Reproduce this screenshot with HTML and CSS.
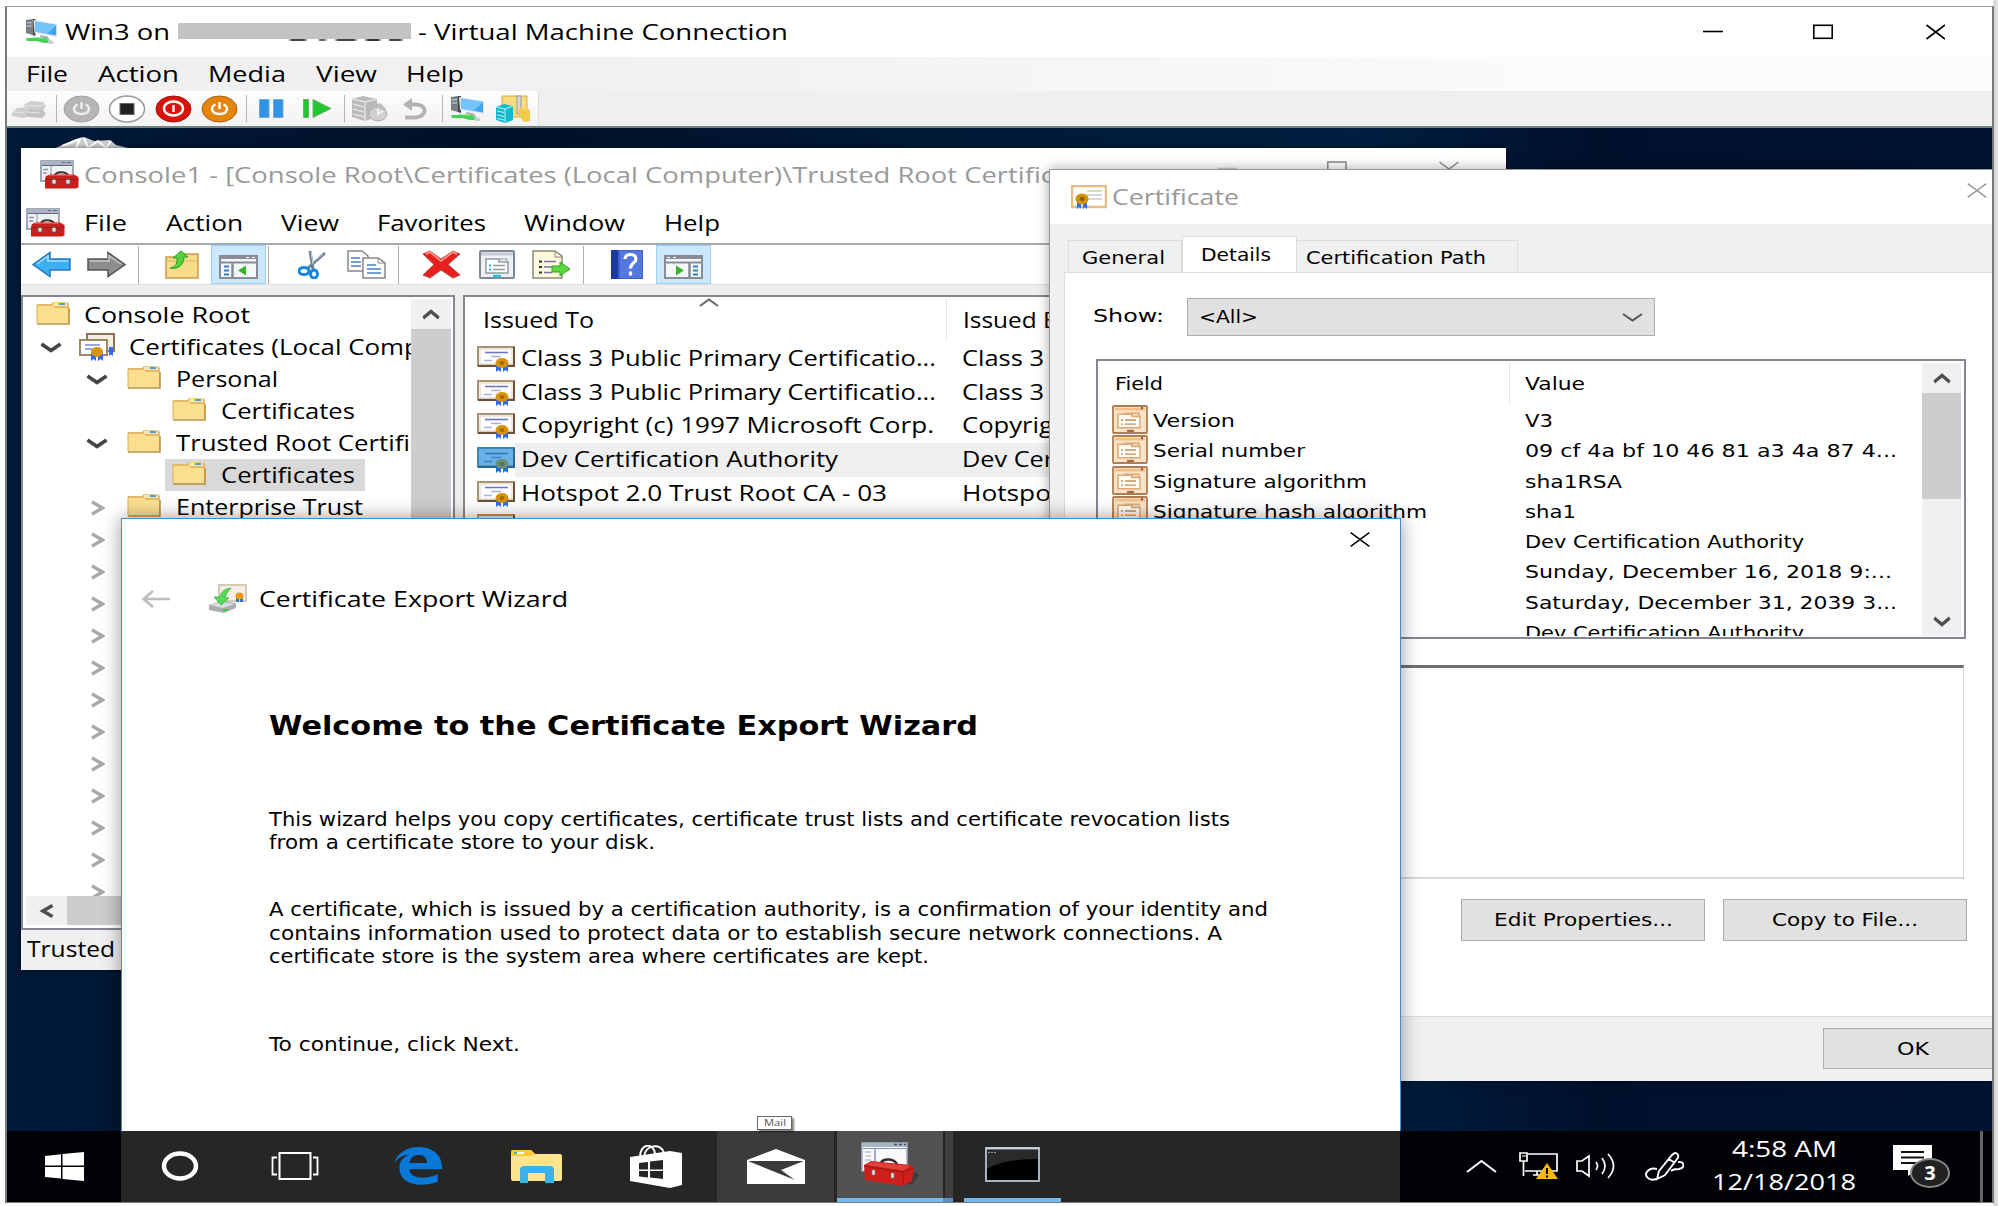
FILE: index.html
```html
<!DOCTYPE html>
<html lang="en">
<head>
<meta charset="utf-8">
<title>Virtual Machine Connection</title>
<link rel="stylesheet" href="styles.css">
</head>
<body>
<svg class="defs" width="0" height="0">
  <symbol id="folder" viewBox="0 0 34 24" preserveAspectRatio="none">
    <path d="M1 3H15L17 1H31L33 3V22H1Z" fill="#e3b96a"/>
    <path d="M17 1.5H31V5H17Z" fill="#f7e3a5"/><path d="M23 2h6v2h-6z" fill="#4a9fe0"/>
    <path d="M1 5H17L19 7H32V22H1Z" fill="#fbdf8e"/><path d="M1 23H33V7" fill="none" stroke="#b98e3e" stroke-width="1.5"/>
    <path d="M1 4V22" stroke="#d9ae58"/>
  </symbol>
  <symbol id="mmc" viewBox="0 0 39 29" preserveAspectRatio="none">
    <rect x="1" y="1" width="32" height="20" fill="#eef1f4" stroke="#8a96a6" stroke-width="1.600"/>
    <rect x="1" y="1" width="32" height="4" fill="#a9b4c4"/><path d="M22 2.500h3M27 2.500h4M2 5.500h30" stroke="#5b6a80" stroke-width="1.200"/>
    <path d="M3 9.500h5M3 13h4" stroke="#8a96a6" stroke-width="1.500"/><path d="M11 6v10" stroke="#8a96a6"/>
    <path d="M15 16C15 11 27 11 28 16" fill="none" stroke="#3a3030" stroke-width="2"/>
    <path d="M6 16L10 14.500H34L38.500 17V27.500L36 28.500H5V19Z" fill="#c9201e"/><path d="M5 19.500H38.500" stroke="#94191a" stroke-width=".8"/>
    <path d="M9 15.300H33" stroke="#ec5e58"/><rect x="12" y="19.500" width="4" height="4.500" fill="#ddd" stroke="#555" stroke-width=".7"/><rect x="26" y="19.500" width="4" height="4.500" fill="#ddd" stroke="#555" stroke-width=".7"/>
  </symbol>
  <symbol id="mmcbig" viewBox="0 0 58 44" preserveAspectRatio="none">
    <rect x="1" y="1" width="45" height="28" fill="#f6f8fa" stroke="#a9b0ba" stroke-width="1.500"/>
    <rect x="1" y="1" width="45" height="4" fill="#a9b4c4"/><path d="M33 2.500h3M38 2.500h3M43 2.500h2" stroke="#3e4c66" stroke-width="1.500"/><path d="M2 6.500H45" stroke="#8794a8"/>
    <path d="M4 10h6M5 14h5M4 18h6" stroke="#9aa" stroke-width="1.200"/><path d="M14 7v14" stroke="#9fb0c6" stroke-width="2"/>
    <path d="M50 28L58 33L52 42L38 43Z" fill="#3d3d3d"/>
    <path d="M20 22C20 15 37 16 36 25" fill="none" stroke="#2b2b2b" stroke-width="2.500"/>
    <path d="M3 23L10 19L50 23L53 27L51 39L42 44L4 38Z" fill="#cf1f1d"/><path d="M3 24L42 30L53 26M42 30V43" fill="none" stroke="#9c1414"/><path d="M10 20L50 24L42 28.500L5 23Z" fill="#e2413b"/>
    <path d="M11 28h3v5h-3zM30 31h3v5h-3z" fill="#e8e8e8" stroke="#777" stroke-width=".7"/>
  </symbol>
  <symbol id="cert" viewBox="0 0 38 26" preserveAspectRatio="none">
    <rect x="1" y="1" width="36" height="18.500" fill="#fff" stroke="#a89274" stroke-width="2"/>
    <path d="M37 1V20H1" fill="none" stroke="#6b5236" stroke-width="2"/><rect x="3" y="3" width="32" height="15" fill="none" stroke="#ddd2c0"/>
    <path d="M8 6.500H31" stroke="#6a78c8" stroke-width="1.600"/><path d="M14 10.500h10M7 14.500h8" stroke="#aab0dc" stroke-width="1.400"/>
    <path d="M19 19h5v7l-2.500-2L19 26zM26 19h5v7l-2.500-2L26 26z" fill="#2d6cf0"/>
    <ellipse cx="25" cy="17" rx="6.500" ry="5" fill="#d8930b"/><ellipse cx="25" cy="17" rx="2.500" ry="2" fill="#a86a00"/>
  </symbol>
  <symbol id="certsel" viewBox="0 0 38 26" preserveAspectRatio="none">
    <rect x="1" y="1" width="36" height="18.500" fill="#68b2e6" stroke="#3f84b4" stroke-width="2"/>
    <path d="M37 1V20H1" fill="none" stroke="#2b6690" stroke-width="2"/>
    <path d="M8 6.500H31" stroke="#3272c2" stroke-width="1.600"/><path d="M14 10.500h10M7 14.500h8" stroke="#3d80c8" stroke-width="1.400"/>
    <path d="M19 19h5v7l-2.500-2L19 26zM26 19h5v7l-2.500-2L26 26z" fill="#1a72d8"/>
    <ellipse cx="25" cy="17" rx="6.500" ry="5" fill="#6a8f73"/><ellipse cx="25" cy="17" rx="2.500" ry="2" fill="#4c7466"/>
  </symbol>
  <symbol id="prop" viewBox="0 0 36 28" preserveAspectRatio="none">
    <rect x="1" y="1" width="34" height="26" rx="1" fill="#fbe3c8" stroke="#b07d50" stroke-width="1.800"/>
    <path d="M3 4H33" stroke="#f2bd86" stroke-width="2.500"/><path d="M29 3h2" stroke="#8a5a30" stroke-width="2"/>
    <path d="M6 9H20V11H28V22H6Z" fill="#fffaf2" stroke="#d9aa78" stroke-width="1.500"/><path d="M20 8v3M12 8H27v3" stroke="#d9aa78" fill="none" stroke-width="1.300"/>
    <path d="M9 14.500h2M13 14.500h11M9 18.500h2M13 18.500h11" stroke="#c0905f" stroke-width="1.300"/><path d="M15 25h7" stroke="#a06c3e" stroke-width="2"/>
  </symbol>
  <symbol id="pc" viewBox="0 0 35 26" preserveAspectRatio="none">
    <path d="M1 1L8 0V16L1 14Z" fill="#777d84"/><path d="M2 4l5-.5M2 7l5 0" stroke="#d7dde2"/><path d="M8 0h3v17l-3-1z" fill="#444"/>
    <path d="M9 1L34 5V18L10 14Z" fill="#dde6ee"/><path d="M11 2.500L33 6V16.500L11 12.500Z" fill="#3fa4ee"/><path d="M11 2.500L33 6L24 14.800L11 12.500Z" fill="#74c3fa"/>
    <path d="M16 16l8 1.500 2 3-9 0z" fill="#aaa"/>
    <path d="M1 19H8L11 18H19L22 20L27 21V24L20 24L12 22H2Z" fill="#45d155"/><path d="M11 18.500l9 .5" stroke="#bff5c3"/><path d="M24 21l6 1v3h-5z" fill="#c8cfd2"/>
  </symbol>
  <symbol id="down" viewBox="0 0 22 11" preserveAspectRatio="none"><path d="M1.500 2L11 8.500L20.500 2" fill="none" stroke="currentColor" stroke-width="3.600"/></symbol>
  <symbol id="right" viewBox="0 0 14 16" preserveAspectRatio="none"><path d="M1 2L11.500 8L1 14" fill="none" stroke="#a8a8a8" stroke-width="3.200"/></symbol>
  <symbol id="close" viewBox="0 0 20 15" preserveAspectRatio="none"><path d="M.7.7L19.300 14.300M19.300.7L.7 14.300" fill="none" stroke="currentColor" stroke-width="1.500"/></symbol>
  <symbol id="pane" viewBox="0 0 39 24" preserveAspectRatio="none">
    <rect x="1" y="1" width="37" height="22" fill="#f4f6f8" stroke="#858d98" stroke-width="2"/><path d="M1 3H38M1 7.500H38" stroke="#858d98" stroke-width="2"/>
    <path d="M27 2.500h3M33 2.500h3" stroke="#fff"/><path d="M13.500 8V23" stroke="#858d98" stroke-width="2.500"/>
    <path d="M5 11.500h5M5 15.500h5M5 19.500h5" stroke="#2f7fc8" stroke-width="1.800"/><path d="M27 10.500V20.500L19 15.500Z" fill="#3db32b"/>
  </symbol>
</svg>

<main class="vm">
  <header class="titlebar vm-title">
    <svg class="pcicon"><use href="#pc"/></svg>
    <span class="t" data-w="105">Win3 on</span><span class="redacted"></span><span class="t" data-w="370">- Virtual Machine Connection</span>
    <svg class="caption" width="242" height="16"><path d="M0 7.500H20" stroke="#000" stroke-width="1.600"/><rect x="110.800" y="1.300" width="18.400" height="13" fill="none" stroke="#000" stroke-width="1.600"/><path d="M223.500 1L242 15M242 1L223.500 15" stroke="#000" stroke-width="1.600"/></svg>
  </header>
  <nav class="vm-menu">
    <span class="t" data-w="42">File</span><span class="t" data-w="81">Action</span><span class="t" data-w="78">Media</span><span class="t" data-w="61">View</span><span class="t" data-w="58">Help</span>
  </nav>
  <div class="vm-tools">
    <div class="strip">
      <i class="tb"><svg width="36" height="18"><path d="M1 13l5-5 12-1 4 3v6l-10 2-11-2zM12 5l8-4 12 1 3 4-3 5-14-1z" fill="#cfcfcf"/><path d="M14 12l6-3 12 1 3 4-4 4-14-1z" fill="#c2c2c2"/><path d="M13 5l14 1 7-1M2 12l12 1M15 12l13 1" stroke="#e6e6e6" fill="none"/></svg></i>
      <i class="sep"></i>
      <i class="tb"><svg width="37" height="28"><ellipse cx="18.500" cy="14" rx="17.500" ry="13" fill="#b5b5b5" stroke="#a3a3a3"/><path d="M14.500 9.500C9 12 10 19 18.500 19S28 12 22.500 9.500M18.500 7v7" fill="none" stroke="#eee" stroke-width="2.400"/></svg></i>
      <i class="tb"><svg width="38" height="28"><ellipse cx="19" cy="14" rx="17.500" ry="13" fill="#fff" stroke="#999" stroke-width="1.500"/><rect x="12" y="8.500" width="14" height="11" fill="#222" stroke="#666"/></svg></i>
      <i class="tb"><svg width="37" height="28"><ellipse cx="18.500" cy="14" rx="17.500" ry="13" fill="#d9130b" stroke="#9e130d"/><ellipse cx="18.500" cy="13.500" rx="9.500" ry="7" fill="none" stroke="#fff" stroke-width="2.400"/><path d="M18.500 10v7" stroke="#fff" stroke-width="2.400"/></svg></i>
      <i class="tb"><svg width="37" height="28"><ellipse cx="18.500" cy="14" rx="17.500" ry="13" fill="#e5850c" stroke="#a86414"/><path d="M14.500 9.500C9 12 10 19 18.500 19S28 12 22.500 9.500M18.500 7v7" fill="none" stroke="#fff" stroke-width="2.400"/></svg></i>
      <i class="sep"></i>
      <i class="tb"><svg width="25" height="19"><path d="M.5.5h9.500v18H.5zM14.500.5H24v18h-9.500z" fill="#2f93e6" stroke="#7fa6c8"/></svg></i>
      <i class="tb"><svg width="29" height="19"><path d="M.5.500h5v18h-5zM10 .5L28 9.500L10 18.500Z" fill="#1fc82b" stroke="#6fae74"/></svg></i>
      <i class="sep"></i>
      <i class="tb"><svg width="37" height="27"><path d="M1 4L12 1L26 4V22L14 26L1 22Z" fill="#b9b9b9"/><path d="M1 4l13 3 12-3M14 7v19M2 9l11 3M2 14l11 3M2 19l11 3" stroke="#e2e2e2" stroke-width="1.500" fill="none"/><ellipse cx="27" cy="19" rx="9" ry="7" fill="#d0d0d0" stroke="#b0b0b0"/><path d="M27 14v5l5-3" fill="none" stroke="#f5f5f5" stroke-width="2"/><path d="M21 10l8 0 5 5" stroke="#bbb" stroke-width="3" fill="none"/></svg></i>
      <i class="tb"><svg width="24" height="22"><path d="M2 19.500H13C25 18 24 6 12 6.500H6" fill="none" stroke="#b3b3b3" stroke-width="4"/><path d="M9 0V13L0 6.500Z" fill="#b3b3b3"/></svg></i>
      <i class="sep"></i>
      <i class="tb"><svg width="35" height="26"><use href="#pc"/></svg></i>
      <i class="tb"><svg width="35" height="28"><path d="M6 1H31V22H6Z" fill="#f5db7e" stroke="#d9ab35"/><path d="M21 1h4v18h-4z" fill="#d9d9d9" stroke="#999"/><path d="M21 15l3-2 10 2v11l-6 1-4-5z" fill="#f1c94b"/><path d="M0 12L8 9L17 11V25L9 28L0 25Z" fill="#13b9cf"/><path d="M0 12l9 2 8-3M9 14v13M1 16l7 1.500M1 20l7 1.500M1 23.500l7 1.500" stroke="#bdf3fa" fill="none"/></svg></i>
    </div>
  </div>

  <section class="desktop">
    <svg class="bin" width="84" height="14"><path d="M3 13L26 3L34 1L44 5L60 4L66 9L82 13Z" fill="#c9ced3"/><path d="M12 10L30 3L26 12M34 2L38 12L48 5L56 12L61 5" fill="none" stroke="#fff" stroke-width="2"/></svg>

    <article class="console">
      <header class="con-title">
        <svg width="39" height="29"><use href="#mmc"/></svg>
        <span class="t grey" data-w="970">Console1 - [Console Root\Certificates (Local Computer)\Trusted Root Certific</span>
      </header>
      <svg class="con-caption" width="242" height="8"><path d="M0 7.500H19" stroke="#ccc" stroke-width="1.600"/><path d="M109.800 8V1H128V8M221.500 1L231 8L240.500 1" fill="none" stroke="#888" stroke-width="1.500"/></svg>
      <nav class="con-menu">
        <svg width="39" height="29"><use href="#mmc"/></svg>
        <span class="t" data-w="43">File</span><span class="t" data-w="77">Action</span><span class="t" data-w="58">View</span><span class="t" data-w="109">Favorites</span><span class="t" data-w="101">Window</span><span class="t" data-w="56">Help</span>
      </nav>
      <div class="con-tools">
        <i class="cb"><svg width="39" height="27"><path d="M1 13.500L18 1.500V8H38V19H18V25.500Z" fill="#3cb0f3" stroke="#2676bd" stroke-width="1.500"/><path d="M5 13L16 5V10H36" fill="none" stroke="#a5e0ff" stroke-width="1.500"/></svg></i>
        <i class="cb"><svg width="39" height="27"><path d="M38 13.500L21 1.500V8H1V19H21V25.500Z" fill="#8d8d8d" stroke="#555" stroke-width="1.500"/><path d="M2.500 10H22V5L34 13" fill="none" stroke="#c6c6c6" stroke-width="1.500"/></svg></i>
        <i class="csep"></i>
        <i class="cb"><svg width="34" height="29"><path d="M1 7H13L16 4H33V28H1Z" fill="#f9dc8b" stroke="#c79c48" stroke-width="1.500"/><path d="M1 11H33" stroke="#e0b55e"/><path d="M5 18C12 17 12 12 12 8H8L16 1L23 7H19C19 14 14 20 5 18Z" fill="#52d13b" stroke="#2f9a23"/></svg></i>
        <i class="cb on"><svg width="39" height="24"><use href="#pane"/></svg></i>
        <i class="csep"></i>
        <i class="cb"><svg width="28" height="29"><path d="M12 1L15 19M27 3L10 18" stroke="#6b7e92" stroke-width="3"/><path d="M13 2l2 12M25 4L14 13" stroke="#c5d2de" stroke-width="1"/><ellipse cx="6" cy="21" rx="5" ry="3.500" fill="none" stroke="#1284e0" stroke-width="3"/><ellipse cx="16" cy="24" rx="3.500" ry="4" fill="none" stroke="#1284e0" stroke-width="3"/></svg></i>
        <i class="cb"><svg width="39" height="29"><path d="M1 1H15L21 6V21H1Z" fill="#fff" stroke="#888" stroke-width="1.500"/><path d="M4 8h9M4 12h10M4 16h10" stroke="#4b7fc6" stroke-width="1.500"/><path d="M16 8H31L38 13V28H16Z" fill="#fff" stroke="#888" stroke-width="1.500"/><path d="M31 8v5h7" fill="none" stroke="#888"/><path d="M20 15h9M20 19h14M20 23h14" stroke="#4b7fc6" stroke-width="1.500"/></svg></i>
        <i class="csep"></i>
        <i class="cb"><svg width="39" height="29"><path d="M1 4L8 1L19 9L31 1L38 4L26 14.500L38 25L31 28L19 20L8 28L1 25L12 14.500Z" fill="#e8201d" stroke="#b24a48"/><path d="M4 4L8 2L19 11L31 2L35 4" fill="none" stroke="#ff8a80" stroke-width="2"/></svg></i>
        <i class="cb"><svg width="36" height="29"><rect x="1" y="1" width="34" height="27" rx="1" fill="#eef1f4" stroke="#808994" stroke-width="2"/><path d="M2 4H34" stroke="#c4ccd5" stroke-width="3"/><path d="M7 9H20V12H29V23H7Z" fill="#fff" stroke="#8f99a5" stroke-width="1.500"/><path d="M20 9h8v3" fill="none" stroke="#8f99a5"/><path d="M10 15.500h2M10 19.500h2" stroke="#1bb5e8" stroke-width="2"/><path d="M14 15.500h12M14 19.500h12" stroke="#999" stroke-width="1.500"/><path d="M14 26h8" stroke="#22c4f2" stroke-width="2.500"/></svg></i>
        <i class="cb"><svg width="39" height="29"><path d="M1 1H23L30 6V28H1Z" fill="#fdf9dd" stroke="#8a8a7a" stroke-width="1.500"/><path d="M23 1v6h7" fill="none" stroke="#8a8a7a"/><path d="M7 11.500h3M7 17h3M7 22.500h3" stroke="#333" stroke-width="2"/><path d="M12 11.500h12M12 17h8M12 22.500h8" stroke="#7a70a8" stroke-width="1.500"/><path d="M20 16H28V12L38 19L28 26V22H20Z" fill="#5bd740" stroke="#37a326"/></svg></i>
        <i class="csep"></i>
        <i class="cb"><svg width="32" height="29" viewBox="0 0 32 29"><rect width="32" height="29" fill="#3d5fd0"/><path d="M0 0H7V29H0Z" fill="#1b37a0"/><path d="M9 1h22v27H9z" fill="#5478e0"/><path d="M14 9C14 3 25 3 25 9C25 13 19.500 13 19.500 18.500M19.500 21.500v4" fill="none" stroke="#fff" stroke-width="3.200"/></svg></i>
        <i class="cb on flip"><svg width="39" height="24"><use href="#pane"/></svg></i>
      </div>
      <div class="panes">
        <div class="tree">
          <div class="tree-main">
            <div class="nodes">
              <div class="node l0"><svg class="fo"><use href="#folder"/></svg><span class="t" data-w="166">Console Root</span></div>
              <div class="node l1"><svg class="ch"><use href="#down"/></svg><svg class="store" width="36" height="28" viewBox="0 0 36 28"><path d="M8 1H35V18H8Z" fill="#f3ece0" stroke="#8b7354" stroke-width="2"/><path d="M30 14h4v9l-2-1.500-2 1.500z" fill="#2d6cf0"/><path d="M1 7H28V22H1Z" fill="#fff" stroke="#a08765" stroke-width="2"/><path d="M6 12h15M6 16h7" stroke="#7a86cf" stroke-width="1.500"/><path d="M12 20h5v8l-2.500-2-2.500 2zM19 20h5v8l-2.500-2-2.500 2z" fill="#2d6cf0"/><ellipse cx="18" cy="19" rx="6" ry="5" fill="#d8930b"/></svg><span class="t" data-w="291">Certificates (Local Comp</span></div>
              <div class="node l2"><svg class="ch"><use href="#down"/></svg><svg class="fo"><use href="#folder"/></svg><span class="t" data-w="102">Personal</span></div>
              <div class="node l3"><svg class="fo"><use href="#folder"/></svg><span class="t" data-w="134">Certificates</span></div>
              <div class="node l2"><svg class="ch"><use href="#down"/></svg><svg class="fo"><use href="#folder"/></svg><span class="t" data-w="234">Trusted Root Certifi</span></div>
              <div class="node l3 sel"><svg class="fo"><use href="#folder"/></svg><span class="t" data-w="134">Certificates</span></div>
              <div class="node l2"><svg class="cr"><use href="#right"/></svg><svg class="fo"><use href="#folder"/></svg><span class="t" data-w="187">Enterprise Trust</span></div>
              <div class="node l2"><svg class="cr"><use href="#right"/></svg></div>
              <div class="node l2"><svg class="cr"><use href="#right"/></svg></div>
              <div class="node l2"><svg class="cr"><use href="#right"/></svg></div>
              <div class="node l2"><svg class="cr"><use href="#right"/></svg></div>
              <div class="node l2"><svg class="cr"><use href="#right"/></svg></div>
              <div class="node l2"><svg class="cr"><use href="#right"/></svg></div>
              <div class="node l2"><svg class="cr"><use href="#right"/></svg></div>
              <div class="node l2"><svg class="cr"><use href="#right"/></svg></div>
              <div class="node l2"><svg class="cr"><use href="#right"/></svg></div>
              <div class="node l2"><svg class="cr"><use href="#right"/></svg></div>
              <div class="node l2"><svg class="cr"><use href="#right"/></svg></div>
              <div class="node l2"><svg class="cr"><use href="#right"/></svg></div>
            </div>
            <div class="vbar"><i class="vbtn"><svg class="up" width="18" height="11"><use href="#down"/></svg></i><i class="thumb"></i></div>
          </div>
          <div class="hbar"><i class="hbtn"><svg width="15" height="14"><path d="M13.500 1.500L4 7L13.500 12.500" fill="none" stroke="#505050" stroke-width="3.600"/></svg></i><i class="thumb"></i></div>
        </div>
        <div class="list">
          <svg class="sort" width="20" height="9"><path d="M1 8L10 1.500L19 8" fill="none" stroke="#666" stroke-width="2"/></svg>
          <div class="lhead"><span class="c1"><span class="t" data-w="111">Issued To</span></span><span class="c2"><span class="t" data-w="108">Issued By</span></span></div>
          <div class="lrow"><svg class="ce"><use href="#cert"/></svg><span class="c1"><span class="t" data-w="415">Class 3 Public Primary Certificatio...</span></span><span class="c2"><span class="t" data-w="82">Class 3</span></span></div>
          <div class="lrow"><svg class="ce"><use href="#cert"/></svg><span class="c1"><span class="t" data-w="415">Class 3 Public Primary Certificatio...</span></span><span class="c2"><span class="t" data-w="82">Class 3</span></span></div>
          <div class="lrow"><svg class="ce"><use href="#cert"/></svg><span class="c1"><span class="t" data-w="413">Copyright (c) 1997 Microsoft Corp.</span></span><span class="c2"><span class="t" data-w="91">Copyrig</span></span></div>
          <div class="lrow picked"><svg class="ce"><use href="#certsel"/></svg><span class="c1"><span class="t" data-w="317">Dev Certification Authority</span></span><span class="c2"><span class="t" data-w="92">Dev Cer</span></span></div>
          <div class="lrow"><svg class="ce"><use href="#cert"/></svg><span class="c1"><span class="t" data-w="366">Hotspot 2.0 Trust Root CA - 03</span></span><span class="c2"><span class="t" data-w="89">Hotspo</span></span></div>
          <div class="lrow"><svg class="ce"><use href="#cert"/></svg></div>
        </div>
      </div>
      <footer class="status"><span class="t" data-w="88">Trusted</span></footer>
    </article>

    <article class="certwin dlg">
      <header class="cert-title">
        <svg width="36" height="24" viewBox="0 0 36 24"><rect x="1" y="1" width="34" height="21" fill="#fff" stroke="#e8bc85" stroke-width="2.500"/><path d="M16 6h15M16 10h15M16 14h15" stroke="#ccc" stroke-width="1.500"/><path d="M6 15h4v9l-2-2-2 2zM12 15h4v9l-2-2-2 2z" fill="#2d6cf0"/><ellipse cx="11" cy="14" rx="6.500" ry="5.500" fill="#cf9405"/><ellipse cx="11" cy="14" rx="2.500" ry="2" fill="#8a5f00"/></svg>
        <span class="t ui grey" data-w="127">Certificate</span>
        <svg class="x grey" width="20" height="15"><use href="#close"/></svg>
      </header>
      <div class="tabs"><span class="tab g"><span class="t" data-w="83">General</span></span><span class="tab active"><span class="t" data-w="70">Details</span></span><span class="tab p"><span class="t" data-w="180">Certification Path</span></span></div>
      <div class="page">
        <div class="show"><span class="t" data-w="71">Show:</span><div class="select"><span class="t" data-w="59">&lt;All&gt;</span><svg width="21" height="9"><path d="M1 1L10.500 7.500L20 1" fill="none" stroke="#555" stroke-width="2"/></svg></div></div>
        <div class="fields">
          <div class="rows">
            <div class="frow fhead"><span class="f"><span class="t" data-w="48">Field</span></span><span class="v"><span class="t" data-w="60">Value</span></span></div>
            <div class="frow"><span class="f"><svg><use href="#prop"/></svg><span class="t" data-w="82">Version</span></span><span class="v"><span class="t" data-w="28">V3</span></span></div>
            <div class="frow"><span class="f"><svg><use href="#prop"/></svg><span class="t" data-w="152">Serial number</span></span><span class="v"><span class="t" data-w="372">09 cf 4a bf 10 46 81 a3 4a 87 4...</span></span></div>
            <div class="frow"><span class="f"><svg><use href="#prop"/></svg><span class="t" data-w="214">Signature algorithm</span></span><span class="v"><span class="t" data-w="97">sha1RSA</span></span></div>
            <div class="frow"><span class="f"><svg><use href="#prop"/></svg><span class="t" data-w="274">Signature hash algorithm</span></span><span class="v"><span class="t" data-w="51">sha1</span></span></div>
            <div class="frow"><span class="f"></span><span class="v"><span class="t" data-w="279">Dev Certification Authority</span></span></div>
            <div class="frow"><span class="f"></span><span class="v"><span class="t" data-w="367">Sunday, December 16, 2018 9:...</span></span></div>
            <div class="frow"><span class="f"></span><span class="v"><span class="t" data-w="372">Saturday, December 31, 2039 3...</span></span></div>
            <div class="frow"><span class="f"></span><span class="v"><span class="t" data-w="279">Dev Certification Authority</span></span></div>
          </div>
          <div class="fbar"><i class="vbtn"><svg class="up" width="18" height="11"><use href="#down"/></svg></i><i class="thumb"></i><i class="vbtn"><svg width="18" height="11"><use href="#down"/></svg></i></div>
        </div>
        <div class="detail"></div>
        <div class="btns"><span class="btn"><span class="t" data-w="179">Edit Properties...</span></span><span class="btn"><span class="t" data-w="146">Copy to File...</span></span></div>
      </div>
      <footer class="cert-foot"><span class="btn ok"><span class="t" data-w="32">OK</span></span></footer>
    </article>

    <article class="wizard dlg">
      <svg class="wx" width="20" height="15"><use href="#close"/></svg>
      <header class="wiz-head">
        <svg width="30" height="20"><path d="M29 10H3M12 2L2.500 10L12 18" fill="none" stroke="#bdbdbd" stroke-width="2.600"/></svg>
        <svg class="wi" width="38" height="29" viewBox="0 0 38 29"><path d="M10 1H37V17H10Z" fill="#f4efe6" stroke="#d6cab5" stroke-width="2"/><path d="M0 21L12 17L27 19V24L15 29L0 26Z" fill="#a9adb0"/><path d="M1 21L12 18L26 20L14 24Z" fill="#d8dcde"/><path d="M14 26h5" stroke="#3ccf3c" stroke-width="2"/><path d="M27 13h3v5h-3zM31 13h3v5h-3z" fill="#2d6cf0"/><ellipse cx="30.500" cy="12" rx="4" ry="3.500" fill="#e39a10"/><path d="M22 4C14 5 12 9 11 13H5L12 21L20 14H16C17 10 19 7 22 4Z" fill="#57d957" stroke="#37b037" stroke-width=".8"/></svg>
        <span class="t ui" data-w="309">Certificate Export Wizard</span>
      </header>
      <div class="wiz-body">
        <h1><span class="t" data-w="709">Welcome to the Certificate Export Wizard</span></h1>
        <p class="p1"><span class="t" data-w="961">This wizard helps you copy certificates, certificate trust lists and certificate revocation lists</span><br><span class="t" data-w="386">from a certificate store to your disk.</span></p>
        <p class="p2"><span class="t" data-w="999">A certificate, which is issued by a certification authority, is a confirmation of your identity and</span><br><span class="t" data-w="953">contains information used to protect data or to establish secure network connections. A</span><br><span class="t" data-w="660">certificate store is the system area where certificates are kept.</span></p>
        <p class="p3"><span class="t" data-w="251">To continue, click Next.</span></p>
      </div>
    </article>

    <footer class="taskbar">
      <i class="start"><svg width="39" height="29"><path d="M0 4L16 2.200V13.500H0ZM17.500 2L39 0V13.500H17.500ZM0 15H16V26.500L0 25ZM17.500 15H39V29L17.500 27Z" fill="#fff"/></svg></i>
      <i class="app"><svg width="40" height="32"><ellipse cx="20" cy="16" rx="16" ry="12.500" fill="none" stroke="#fff" stroke-width="4.500"/></svg></i>
      <i class="app tview"><svg width="48" height="28"><rect x="8.500" y="1" width="31" height="26" fill="none" stroke="#fff" stroke-width="2"/><path d="M6 5.500H1.500V22.500H6M42 5.500H46.500V22.500H42" fill="none" stroke="#fff" stroke-width="1.800"/></svg></i>
      <i class="app"><svg width="48" height="38" viewBox="1102 923 134 114" preserveAspectRatio="none"><path fill="#0a78d7" fill-rule="evenodd" d="M1102 974C1110 940 1140 923 1170 923C1212 923 1236 950 1236 982V990H1145C1147 1020 1192 1022 1224 1004V1027C1180 1046 1117 1037 1117 985C1117 968 1127 953 1146 945C1125 947 1110 958 1102 974ZM1145 971H1194C1194 950 1180 946 1168 947C1155 948 1147 958 1145 971Z"/></svg></i>
      <i class="app"><svg width="51" height="33"><path d="M0 2Q0 0 2 0H20L24 4H49Q51 4 51 6V29Q51 31 49 31H2Q0 31 0 29Z" fill="#ffe48f"/><path d="M0 6V2Q0 0 2 0H20L24 4L20 6Z" fill="#fcc930"/><path d="M3 3h10" stroke="#fff" stroke-width="2"/><path d="M3 3h3" stroke="#35a8e0" stroke-width="2"/><path d="M9 33V20Q9 16 13 16H39Q43 16 43 20V33H34V23H17V33Z" fill="#38b3e8"/></svg></i>
      <i class="app"><svg width="52" height="43"><path d="M10 12C10-2 24-3 25 9M14 12C15-1 32-2 34 8" fill="none" stroke="#fff" stroke-width="2"/><path d="M0 12L40 6L52 8V40L40 43L0 36Z" fill="#fff"/><path d="M9 18L18 17V24.500H9ZM20 16.500L33 15V24.500H20ZM9 26H18V32.500L9 31.500ZM20 26H33V34L20 32.500Z" fill="#262626"/></svg></i>
      <i class="app mail"><svg width="58" height="35"><path d="M0 11L29 0L58 11V35H0Z" fill="#fff"/><path d="M1 12H57L34 21L48 31Z" fill="#3b3b3b"/><path d="M36 21L58 12V35L48 31Z" fill="#fff"/></svg></i>
      <i class="app mmcapp"><svg width="58" height="44"><use href="#mmcbig"/></svg></i><i class="stack"></i>
      <i class="app cmd"><svg width="55" height="35"><rect x="1" y="1" width="53" height="33" fill="#000" stroke="#aab3bd" stroke-width="2"/><path d="M2 3H53V12Q18 12 2 22Z" fill="#2a2a2a"/><path d="M1 1.500H54" stroke="#cfd6dd" stroke-width="2"/><path d="M3 5.500h8" stroke="#999" stroke-dasharray="2 1"/></svg></i>
      <div class="tray">
        <svg class="tchev" width="31" height="14"><path d="M1 13L15.500 2L30 13" fill="none" stroke="#fff" stroke-width="2"/></svg>
        <svg class="net" width="39" height="28"><path d="M9 2H38V19H6M1 1H8V9H1ZM4.500 9V24M14 23H22M18 19V23" fill="none" stroke="#fff" stroke-width="1.700"/><path d="M3 4h4" stroke="#fff"/><path d="M28 11L39 27H17Z" fill="#fdb913"/><path d="M28 16v6M28 23.500v2" stroke="#000" stroke-width="2"/></svg>
        <svg class="snd" width="41" height="28"><path d="M1 9H6L13 4V24L6 19H1ZM20 10Q23 14 20 18M26 6Q32 14 26 22M32 2Q43 14 32 26" fill="none" stroke="#fff" stroke-width="1.700"/></svg>
        <svg class="pen" width="39" height="30"><path d="M14 20L27 4Q31 0 33 4Q34 6 32 8L20 24L12 28ZM24 8L30 12M12 18C4 16-1 22 2 26Q5 30 11 28M33 11C40 10 40 17 34 18Q28 18 26 20" fill="none" stroke="#fff" stroke-width="1.900"/></svg>
        <div class="clock"><span class="t" data-w="105">4:58 AM</span><span class="t" data-w="144">12/18/2018</span></div>
        <div class="notes"><svg width="40" height="32"><path d="M0 0H39V25H23L15 31V25H0Z" fill="#fff"/><path d="M8 7H31M8 12.500H31M8 18H31" stroke="#111" stroke-width="2"/></svg><b>3</b></div>
        <i class="peek"></i>
      </div>
    </footer>
    <div class="tip"><span class="t" data-w="22">Mail</span></div>
  </section>
</main>
<script src="fit.js"></script>
</body>
</html>
```
FILE: styles.css
```css
* { box-sizing: border-box; }
body {
  margin: 0; width: 1998px; height: 1206px; overflow: hidden;
  background: linear-gradient(90deg, #fdfdfd 1993px, #d4d4d4 1994px, #e6e6e6);
  padding: 6px 0 0 5px;
  font: 21px/30px "Open Sans", "Noto Sans", sans-serif; color: #000;
}
i { font-style: normal; display: flex; }
svg { flex: none; display: block; }
.defs { position: absolute; }
.t { display: inline-block; flex: none; white-space: nowrap; transform-origin: 0 50%; }
.grey { color: #999; }
.vm {
  width: 1989px; height: 1197px; display: flex; flex-direction: column;
  border: solid #77797b; border-width: 1px 2px 1px 2px; border-top-color: #9a9a8c; background: #fff;
}

.vm-title { height: 50px; display: flex; align-items: center; padding: 0 0 1px 18px; }
.pcicon { width: 33px; height: 26px; margin-right: 7px; }
.redacted {
  width: 233px; height: 18px; margin: 0 7px 0 8px; flex: none;
  background:
    linear-gradient(#c3c3c3, #c3c3c3) 0 0 / 100% 16px no-repeat,
    linear-gradient(90deg, transparent 110px, #444 114px 126px, transparent 130px 140px, #666 142px 146px, transparent 150px 156px, #444 160px 176px, transparent 180px 186px, #333 190px 200px, transparent 204px 210px, #444 212px 222px, transparent 226px);
}
.caption { margin-left: auto; margin-right: 47px; }
.vm-menu {
  height: 34px; display: flex; align-items: center; gap: 29.500px; padding-left: 19px;
  background: linear-gradient(90deg, #f0f0f0, #f1f1f1 30%, #fcfcfc 85%); line-height: 34px;
}
.vm-tools { height: 37px; background: #efefef; border-bottom: 2px solid #75807f; }
.strip { width: 532px; height: 35px; display: flex; background: linear-gradient(#fdfdfd, #f2f2f2); border-right: 1px solid #ddd; }
.tb { width: 46px; align-items: center; justify-content: center; padding-right: 2px; }
.sep { width: 6px; padding: 4px 2.5px; }
.sep::before { content: ""; width: 1px; background: #b5b5b5; }

.desktop {
  position: relative; flex: 1; overflow: hidden;
  background: linear-gradient(90deg, #001a38 0, #001128 25%, #001b38 50%, #001e40 68%, #00112c 80%, #001432 100%);
}
.bin { position: absolute; left: 43px; top: 8px; }

.console {
  position: absolute; left: 14px; top: 20px; width: 1485px; height: 822px;
  display: flex; flex-direction: column; background: #fff; box-shadow: 0 0 5px rgba(0,0,0,.5);
}
.con-title { height: 57px; display: flex; align-items: center; gap: 5px; padding: 0 0 4px 19px; }
.con-caption { position: absolute; left: 1197px; top: 13px; }
.con-menu { height: 38px; display: flex; align-items: center; gap: 38.300px; padding: 0 0 3px 5px; }
.con-menu svg { margin-right: -19px; }
.con-tools { height: 42px; display: flex; border-top: 2px solid #a7a9ac; border-bottom: 1px solid #ddd; padding: 0 0 0 5px; }
.cb { width: 55px; align-items: center; justify-content: center; padding-right: 4px; }
.cb.on { background: #cce8ff; border: 1px solid #99d1ff; padding: 5px 0 0; }
.flip svg { transform: scaleX(-1); }
.csep { width: 20px; padding: 1px 0 0 2px; }
.csep::before { content: ""; width: 1px; background: #b0b0b0; }
.panes { flex: none; height: 645px; background: #efefef; padding-top: 10px; display: flex; gap: 8px; }
.tree { width: 434px; border: 2px solid #828790; background: #fff; display: flex; flex-direction: column; padding: 2px 2px 2px 3px; }
.tree-main { display: flex; height: 597px; }
.nodes { flex: 1; overflow: hidden; margin-left: -2px; }
.node { height: 32px; display: flex; align-items: center; line-height: 32px; white-space: nowrap; }
.node .t { margin-top: -1px; }
.fo { width: 34px; height: 24px; margin-right: 15px; position: relative; top: -2px; }
.l0 { padding-left: 12px; } .l0 .fo { margin-right: 14px; }
.l1 { padding-left: 16px; }
.l2 { padding-left: 62px; }
.ch { width: 22px; height: 11px; margin-right: 19px; color: #454545; }
.cr { width: 14px; height: 16px; margin: 1px 22px 0 5px; }
.store { margin: 0 14px 0 -2px; }
.l3 { margin-left: 141px; padding: 0 11px 0 7px; width: 200px; }
.sel { background: #d9d9d9; }
.vbar { width: 40px; background: #f0f0f0; display: flex; flex-direction: column; }
.vbtn { height: 30px; align-items: center; justify-content: center; color: #505050; }
.up { transform: scaleY(-1); }
.vbar .thumb { flex: 1; background: #cdcdcd; }
.hbar { height: 29px; display: flex; background: #f0f0f0; }
.hbtn { width: 41px; align-items: center; justify-content: center; }
.hbar .thumb { flex: 1; background: #cdcdcd; }
.list { flex: 1; border: 2px solid #828790; background: #fff; padding: 2px 0 0 12px; position: relative; }
.sort { position: absolute; left: 234px; top: 1px; }
.lhead { display: flex; height: 43px; padding: 0 0 0 6px; line-height: 42px; }
.lhead .c1 { width: 464px; border-right: 1px solid #e5e5e5; }
.lhead .c2 { padding-left: 16px; }
.lrow { display: flex; height: 33.7px; line-height: 33.7px; }
.ce { width: 38px; height: 26px; margin: 4px 0 0; }
.lrow .c1, .lrow .c2 { padding-left: 6px; }
.lrow .c1 { width: 441px; }
.picked .c1, .picked .c2 { background: #efefef; }
.picked .c2 { flex: 1; }
.status { flex: 1; background: #f0f0f0; line-height: 38px; padding-left: 6px; }

.dlg { font: 18.5px/30px "DejaVu Sans", "Noto Sans", sans-serif; }
.ui { font: 21px/30px "Open Sans", "Noto Sans", sans-serif; }
.certwin {
  position: absolute; left: 1042px; top: 41px; width: 943px; height: 912px;
  background: #f0f0f0; display: flex; flex-direction: column; border: solid #999; border-width: 1px 0 0 1px;
  box-shadow: 0 0 12px rgba(0,0,0,.35);
}
.cert-title { height: 54px; background: #fff; display: flex; align-items: center; padding: 0 5px 1px 21px; gap: 5px; }
.cert-title .x { margin: -12px 0 0 auto; }
.tabs { height: 48px; display: flex; align-items: flex-end; padding-left: 18px; }
.tab { height: 32px; border: 1px solid #dcdcdc; border-bottom: 0; line-height: 33px; padding-left: 13px; }
.g { width: 114px; }
.active { width: 115px; height: 37px; background: #fff; padding-left: 18px; line-height: 35px; margin-bottom: -1px; }
.p { width: 221px; padding-left: 9px; border-left: 0; }
.page { height: 745px; margin-left: 14px; background: #fff; border: solid #dcdcdc; border-width: 1px 0 1px 1px; padding: 25px 26px 0 28px; }
.show { display: flex; height: 38px; align-items: center; gap: 23px; line-height: 28px; }
.show .t { margin-top: -2px; }
.select { width: 468px; height: 38px; background: #e1e1e1; border: 1px solid #adadad; display: flex; align-items: center; justify-content: space-between; padding: 0 11px; }
.select .t { margin-top: 0; }
.fields { margin: 23px 0 0 3px; width: 870px; height: 280px; border: 2px solid #828790; display: flex; padding: 2px 3px 1px 0; }
.rows { flex: 1; overflow: hidden; }
.frow { display: flex; height: 30.3px; line-height: 30px; }
.f { width: 412px; display: flex; padding-left: 14px; }
.f svg { width: 36px; height: 29px; margin-right: 5px; margin-top: -1px; }
.v { padding-left: 15px; }
.fhead { height: 43px; line-height: 41px; }
.fhead .f { border-right: 1px solid #e5e5e5; padding-left: 17px; }
.fbar { width: 39px; background: #f0f0f0; display: flex; flex-direction: column; }
.fbar .thumb { height: 106px; background: #cdcdcd; margin-bottom: auto; }
.detail { height: 214px; margin: 26px 0 0; width: 871px; border: solid #d9d9d9; border-width: 3px 1px 2px; border-top-color: #707070; }
.btns { margin-top: 20px; display: flex; gap: 18px; justify-content: flex-end; }
.btn { width: 244px; height: 42px; border: 1px solid #adadad; background: #e1e1e1; display: flex; align-items: center; justify-content: center; }
.btns .btn { position: relative; left: 1px; }
.cert-foot { display: flex; justify-content: flex-end; padding-top: 11px; }
.ok { width: 169px; height: 41px; border-right: 0; padding-left: 10px; }

.wizard {
  position: absolute; left: 114px; top: 390px; width: 1280px; height: 630px;
  background: #fff; border: 1px solid #3a8fd8; box-shadow: 0 0 18px rgba(0,0,0,.4);
  display: flex; flex-direction: column;
}
.wx { position: absolute; right: 30px; top: 13px; }
.wiz-head { display: flex; align-items: center; padding: 61px 0 0 19px; height: 98px; }
.wi { margin: 0 12px 0 38px; }
.wiz-body { padding-left: 147px; font-size: 19px; line-height: 23.200px; }
h1 { margin: 89px 0 0; font-size: 26px; line-height: 40px; }
p { margin: 0; }
.p1 { margin-top: 62px; }
.p2 { margin-top: 44px; }
.p3 { margin-top: 65px; }

.taskbar {
  position: absolute; left: 0; right: 0; bottom: 0; height: 71.5px; display: flex;
  background: linear-gradient(90deg, #000208 114px, #262626 114px 1393px, #000206 1393px);
}
.taskbar > i { align-items: center; justify-content: center; flex: none; }
.start { width: 87px; margin-right: 26px; }
.start svg { margin-left: 28px; }
.app { width: 119px; }
.tview svg { margin-right: 7px; }
.taskbar > .mail { width: 117px; margin-left: 2px; background: #3b3b3b; }
.taskbar > .mmcapp { width: 106px; margin-left: 3px; background: #515151; border-bottom: 4px solid #76b9ed; }
.stack { width: 10px; margin-right: 11px; background: linear-gradient(90deg, #262626 2px, #3f3f3f 2px); border-bottom: 4px solid #5a93c4; }
.taskbar > .cmd { width: 97px; border-bottom: 4px solid #76b9ed; }
.tray { display: flex; align-items: center; margin-left: auto; color: #fff; height: 100%; }
.net { margin-left: 22px; }
.snd { margin-left: 18px; }
.pen { margin-left: 28px; }
.clock { width: 144px; margin-left: 28px; display: flex; flex-direction: column; align-items: center; line-height: 33px; }
.notes { margin-left: 37px; display: flex; width: 57px; height: 42px; position: relative; }
.notes b { position: absolute; left: 17px; top: 13px; width: 40px; height: 30px; border: 2px solid #888; border-radius: 50%; background: #222; text-align: center; font-size: 20px; line-height: 26px; }
.peek { width: 3px; height: 100%; background: #666; margin: 0 9px 0 30px; }
.tip { position: absolute; left: 750px; top: 988px; width: 35px; height: 14px; background: #fff; border: 1px solid #666; box-shadow: 2px 2px 2px rgba(0,0,0,.5); font-size: 9.500px; line-height: 12px; padding-left: 6px; color: #555; }
```
FILE: fit.js
```js
// Stretch each label horizontally to its stated width, keeping the flow around it in step.
document.querySelectorAll('[data-w]').forEach(function (el) {
  var natural = el.getBoundingClientRect().width;
  var target = Number(el.dataset.w);
  el.style.transform = 'scaleX(' + target / natural + ')';
  el.style.marginRight = (target - natural) + 'px';
});
```
